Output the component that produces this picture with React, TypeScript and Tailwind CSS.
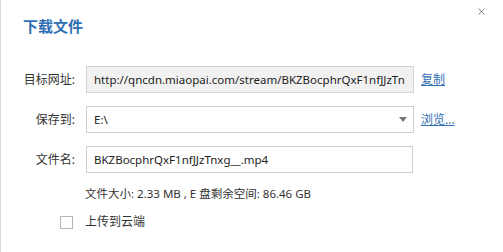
import { X } from "lucide-react";

const font = { fontFamily: '"Noto Sans", "Noto Sans CJK SC", sans-serif' };

const Row = ({ label, children }: { label: string; children: React.ReactNode }) => (
  <div className="flex items-center">
    <div className="w-[75px] shrink-0 pr-[1px] text-right text-[12px] text-[#333]">{label}</div>
    {children}
  </div>
);

export default function App() {
  return (
    <div
      className="relative h-[252px] w-[503px] overflow-hidden border-l border-[#d9d9d9] bg-white text-[#222]"
      style={font}
    >
      <button className="absolute right-[16px] top-[6px] text-[#555]">
        <X size={11} strokeWidth={1.6} />
      </button>

      <div className="pl-[22px] pt-[15px] text-[15px] font-bold leading-[22px] text-[#2f6fb3]">
        下载文件
      </div>

      <div className="mt-[29px] flex flex-col gap-[13px]">
        <Row label="目标网址:">
          <div className="ml-[10px] flex h-[27px] w-[328px] items-center overflow-hidden whitespace-nowrap border border-[#d4d4d4] bg-[#f1f1f1] pl-[7px] text-[11.5px]">
            http://qncdn.miaopai.com/stream/BKZBocphrQxF1nfJJzTn
          </div>
          <a className="ml-[7px] text-[12px] text-[#2f6fb3] underline">复制</a>
        </Row>

        <Row label="保存到:">
          <div className="ml-[10px] flex h-[27px] w-[328px] items-center justify-between border border-[#cfcfcf] bg-white pl-[7px] pr-[6px] text-[11.5px]">
            <span>E:\</span>
            <svg width="8" height="5" viewBox="0 0 8 5">
              <path d="M0 0h8L4 5z" fill="#777" />
            </svg>
          </div>
          <a className="ml-[7px] text-[12px] text-[#2f6fb3] underline">浏览...</a>
        </Row>

        <Row label="文件名:">
          <div className="ml-[10px] flex h-[27px] w-[327px] items-center border border-[#cfcfcf] bg-white pl-[7px] text-[11.5px]">
            BKZBocphrQxF1nfJJzTnxg__.mp4
          </div>
        </Row>
      </div>

      <div className="mt-[13px] pl-[84px] text-[11.5px] leading-[16px] text-[#333]">
        文件大小: 2.33 MB , E 盘剩余空间: 86.46 GB
      </div>

      <label className="mt-[11px] flex items-center pl-[59px] text-[12px] text-[#333]">
        <span className="h-[13px] w-[13px] border border-[#b5b5b5] bg-white" />
        <span className="ml-[12px]">上传到云端</span>
      </label>
    </div>
  );
}
